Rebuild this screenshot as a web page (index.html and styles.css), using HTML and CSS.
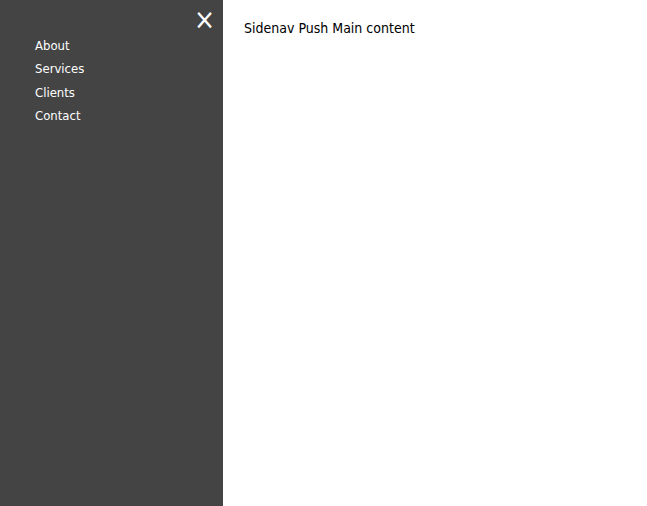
FILE: index.html
```html
<!DOCTYPE html>
<html>
<head>
<meta charset="utf-8">
<link rel="stylesheet" href="styles.css">
</head>
<body>
<div class="layout">
  <nav class="sidenav">
    <a class="close" href="#">&times;</a>
    <a class="link" href="#">About</a>
    <a class="link" href="#">Services</a>
    <a class="link" href="#">Clients</a>
    <a class="link" href="#">Contact</a>
  </nav>
  <main class="main">
    <p class="title">Sidenav Push Main content</p>
  </main>
</div>
</body>
</html>
```
FILE: styles.css
```css
html, body {
  margin: 0;
  padding: 0;
  height: 100%;
}
body {
  font-family: "DejaVu Sans Condensed", "DejaVu Sans", sans-serif;
  font-size: 14px;
}
.layout {
  display: flex;
  height: 100%;
}
.sidenav {
  width: 223px;
  background: #444444;
  display: flex;
  flex-direction: column;
  padding-top: 35px;
  box-sizing: border-box;
  position: relative;
}
.close {
  position: absolute;
  top: 5px;
  right: 8px;
  color: #ffffff;
  font-size: 28px;
  line-height: 30px;
  text-decoration: none;
}
.link {
  color: #ffffff;
  text-decoration: none;
  padding: 2px 0 3px 35px;
  line-height: 18.34px;
  font-size: 13px;
}
.main {
  flex: 1;
  padding: 20px 21px;
}
.title {
  margin: 0;
  color: #000;
}
```
